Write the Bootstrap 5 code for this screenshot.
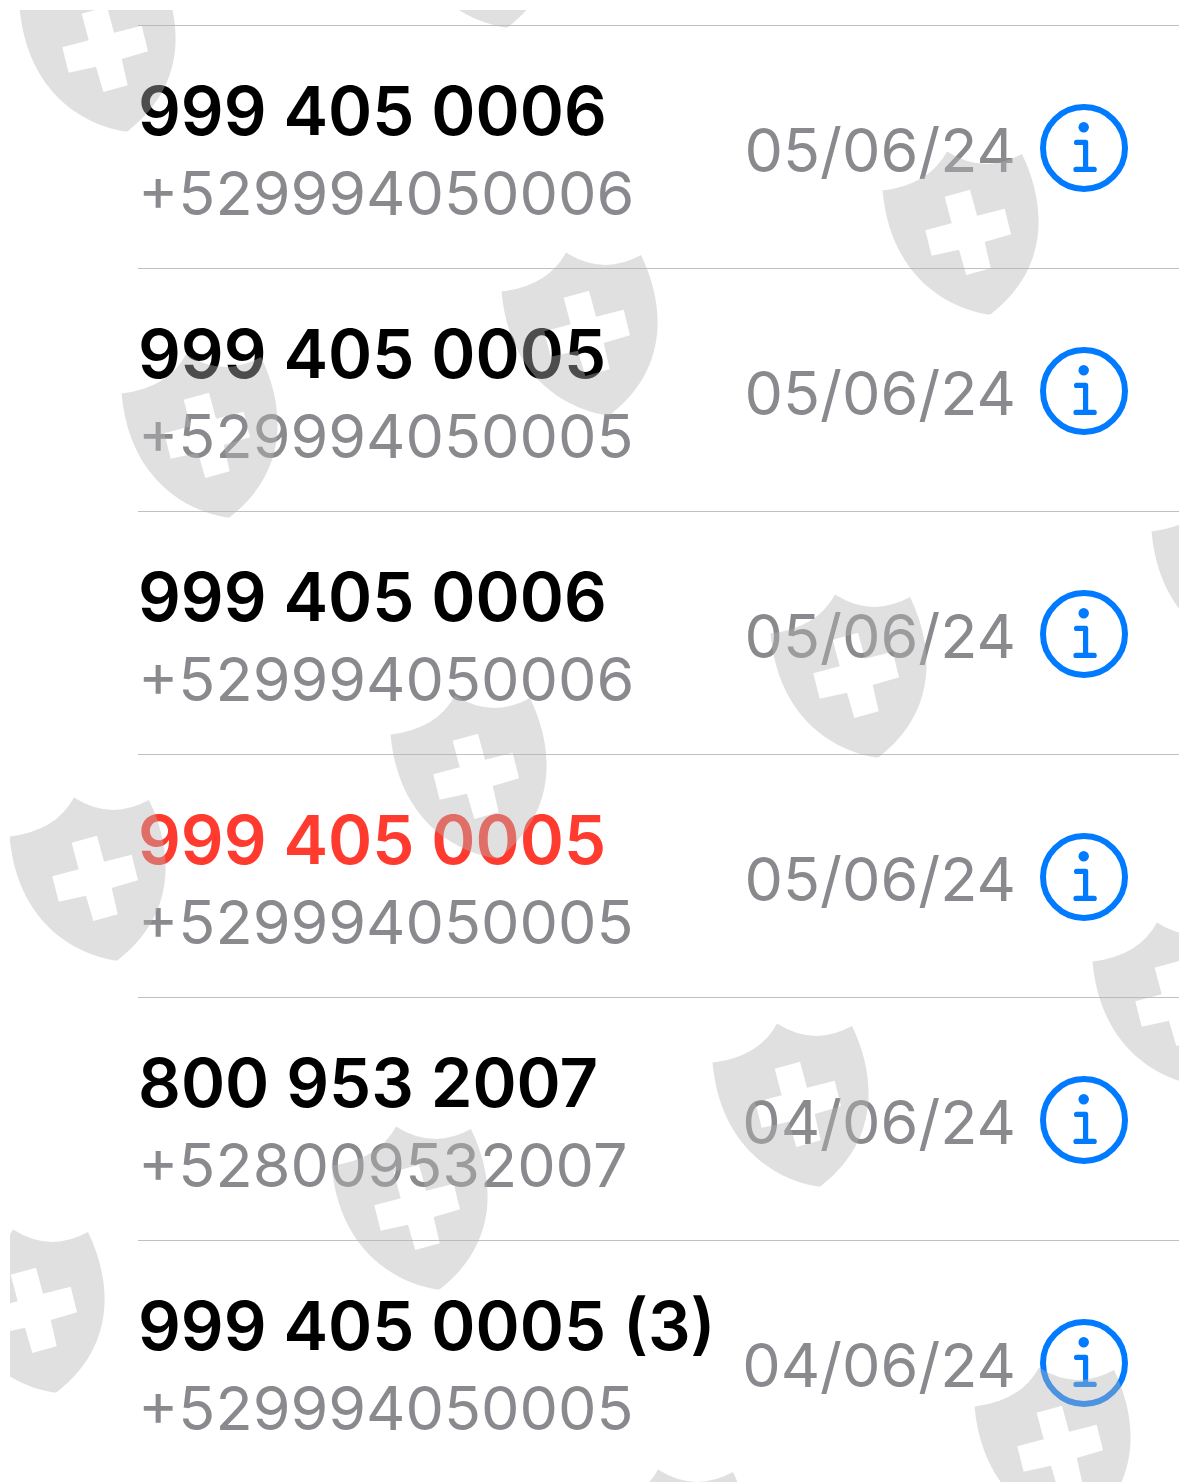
<!DOCTYPE html>
<html lang="es">
<head>
<meta charset="utf-8">
<meta name="viewport" content="width=device-width, initial-scale=1">
<title>Recientes</title>
<link rel="stylesheet" href="https://cdn.jsdelivr.net/npm/bootstrap@5.3.0/dist/css/bootstrap.min.css">
<style>
body { font-family: Inter, "Liberation Sans", sans-serif; background: #fff; }
.call-page { padding: 25px 0 0 138px; min-height: 100vh; }
.call-row { border-top: 1px solid #c0c0c2; padding: 10px 51px 0 0; min-height: 243px; }
.call-row:last-child { min-height: 242px; }
.call-title { font-size: 67px; line-height: 82px; font-weight: 600; color: #000; }
.call-title.missed { color: #ff3b30; }
.call-number, .call-date { font-size: 61px; line-height: 82px; color: #8a8a8e; }
.call-side { gap: 24px; margin-bottom: 4px; }
.info-btn { width: 88px; height: 88px; margin-bottom: 4px; color: #007aff; background: none; border: 0; padding: 0; }
.info-btn svg { display: block; }
.shield-layer { position: absolute; inset: 10px 0 0 10px; overflow: hidden; pointer-events: none; z-index: 2; }
.shield-layer svg { display: block; width: 100%; height: 100%; }
</style>
<script src="https://cdn.jsdelivr.net/npm/bootstrap@5.3.0/dist/js/bootstrap.bundle.min.js"></script>
</head>
<body>
<svg width="0" height="0" class="position-absolute" aria-hidden="true">
  <defs>
    <symbol id="info" viewBox="0 0 88 88">
      <circle cx="44" cy="44" r="41" fill="none" stroke="currentColor" stroke-width="6"/>
      <circle cx="43.7" cy="23.2" r="5.2" fill="currentColor"/>
      <path d="M36.6 38.4H45.6V65.4M36 65.4H54.2" fill="none" stroke="currentColor" stroke-width="5.2" stroke-linecap="round" stroke-linejoin="round"/>
    </symbol>
  </defs>
</svg>
<main class="call-page position-relative overflow-hidden">
  <ul class="list-unstyled mb-0">
    <li class="call-row d-flex align-items-center justify-content-between">
      <div class="text-nowrap"><div class="call-title">999 405 0006</div><div class="call-number">+529994050006</div></div>
      <div class="call-side d-flex align-items-center"><span class="call-date">05/06/24</span><button type="button" class="info-btn" aria-label="Info"><svg width="88" height="88"><use href="#info"/></svg></button></div>
    </li>
    <li class="call-row d-flex align-items-center justify-content-between">
      <div class="text-nowrap"><div class="call-title">999 405 0005</div><div class="call-number">+529994050005</div></div>
      <div class="call-side d-flex align-items-center"><span class="call-date">05/06/24</span><button type="button" class="info-btn" aria-label="Info"><svg width="88" height="88"><use href="#info"/></svg></button></div>
    </li>
    <li class="call-row d-flex align-items-center justify-content-between">
      <div class="text-nowrap"><div class="call-title">999 405 0006</div><div class="call-number">+529994050006</div></div>
      <div class="call-side d-flex align-items-center"><span class="call-date">05/06/24</span><button type="button" class="info-btn" aria-label="Info"><svg width="88" height="88"><use href="#info"/></svg></button></div>
    </li>
    <li class="call-row d-flex align-items-center justify-content-between">
      <div class="text-nowrap"><div class="call-title missed">999 405 0005</div><div class="call-number">+529994050005</div></div>
      <div class="call-side d-flex align-items-center"><span class="call-date">05/06/24</span><button type="button" class="info-btn" aria-label="Info"><svg width="88" height="88"><use href="#info"/></svg></button></div>
    </li>
    <li class="call-row d-flex align-items-center justify-content-between">
      <div class="text-nowrap"><div class="call-title">800 953 2007</div><div class="call-number">+528009532007</div></div>
      <div class="call-side d-flex align-items-center"><span class="call-date">04/06/24</span><button type="button" class="info-btn" aria-label="Info"><svg width="88" height="88"><use href="#info"/></svg></button></div>
    </li>
    <li class="call-row d-flex align-items-center justify-content-between">
      <div class="text-nowrap"><div class="call-title">999 405 0005 (3)</div><div class="call-number">+529994050005</div></div>
      <div class="call-side d-flex align-items-center"><span class="call-date">04/06/24</span><button type="button" class="info-btn" aria-label="Info"><svg width="88" height="88"><use href="#info"/></svg></button></div>
    </li>
  </ul>
  <div class="shield-layer" aria-hidden="true">
    <svg>
      <defs>
        <path id="shield" fill="#b4b4b4" fill-opacity=".42" fill-rule="evenodd" d="M-.5 39.500Q46 34 64 .5Q101 24 139 3C164 55 166 118 108 163Q107 163.700 105 163.500C60 156 7 122 -.5 39.500ZM61.700 45.700L87 38.700L94 64.700L121.700 57.700L128 83.300L101.700 91L107.700 117.300L83.300 124L76 98.700L48.700 104.700L42.300 79.300L68.700 72.300Z"/>
      </defs>
      <g transform="translate(-10 -10)">
        <use href="#shield" x="20" y="-32"/>
        <use href="#shield" x="400" y="-136"/>
        <use href="#shield" x="883" y="151"/>
        <use href="#shield" x="502" y="252"/>
        <use href="#shield" x="122" y="354"/>
        <use href="#shield" x="1152" y="492"/>
        <use href="#shield" x="771" y="594"/>
        <use href="#shield" x="391" y="695"/>
        <use href="#shield" x="10" y="797"/>
        <use href="#shield" x="1093" y="922"/>
        <use href="#shield" x="713" y="1023"/>
        <use href="#shield" x="332" y="1126"/>
        <use href="#shield" x="-51" y="1229"/>
        <use href="#shield" x="975" y="1367"/>
        <use href="#shield" x="594" y="1469"/>
      </g>
    </svg>
  </div>
</main>
</body>
</html>
